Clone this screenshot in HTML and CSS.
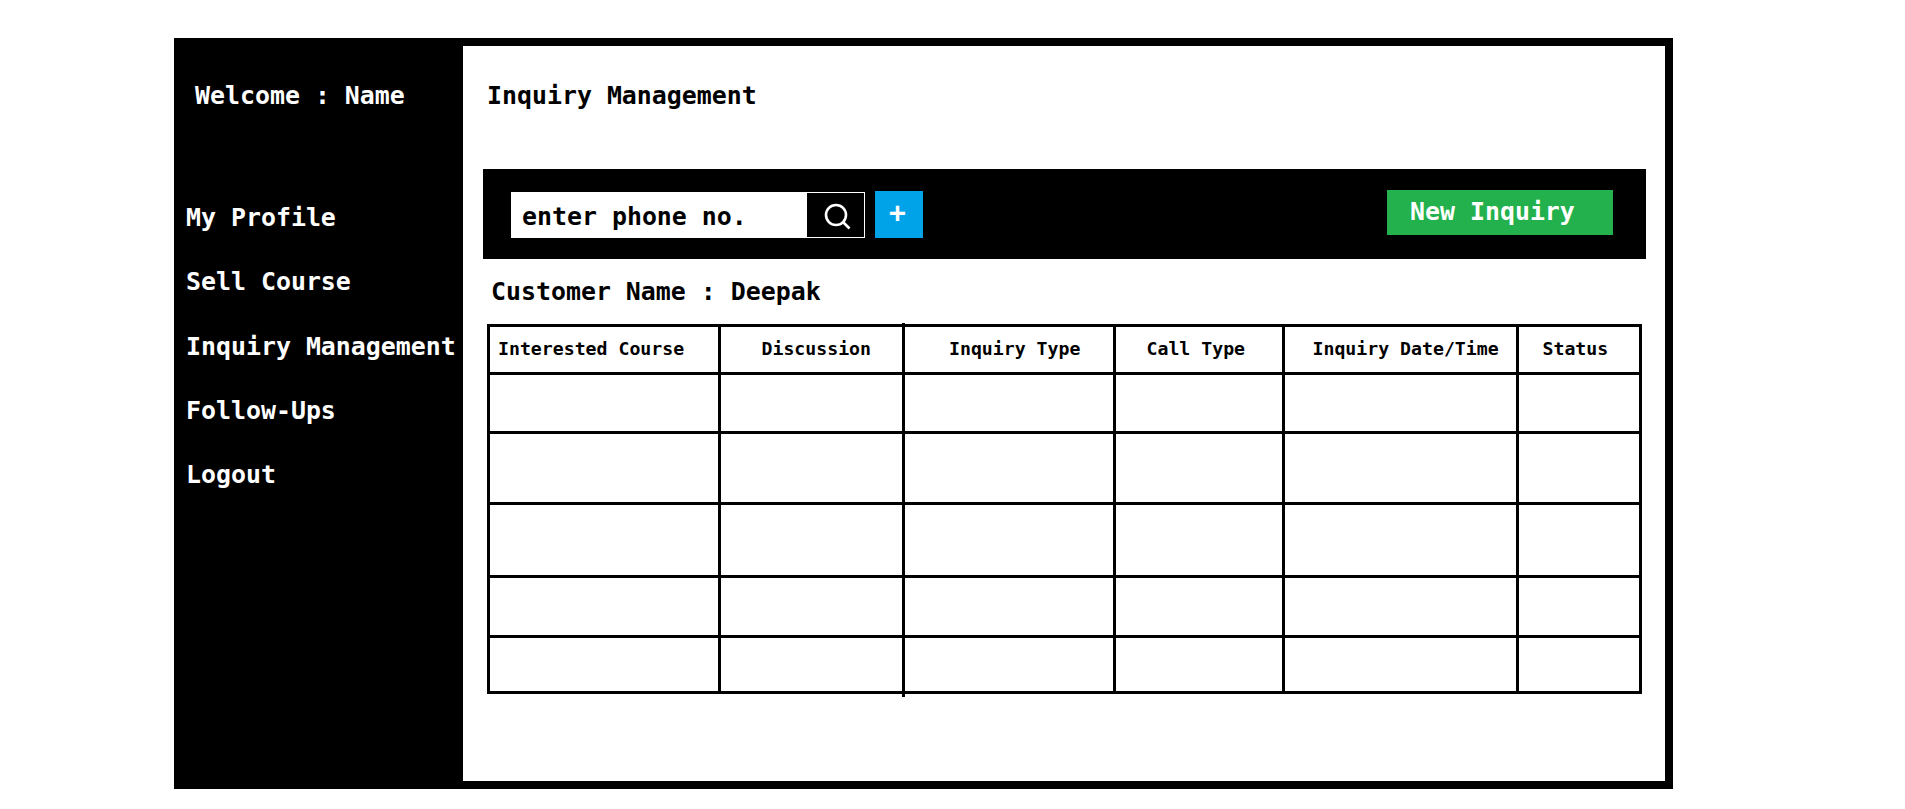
FILE: index.html
```html
<!DOCTYPE html>
<html lang="en">
<head>
    <meta charset="UTF-8">
    <meta name="viewport" content="width=device-width, initial-scale=1.0">
    <title>Inquiry Management</title>
    <link rel="stylesheet" href="styles.css">
</head>
<body>
    <div class="frame">
        <nav class="sidebar">
            <div class="welcome">Welcome : Name</div>
            <a class="nav-link" href="#">My Profile</a>
            <a class="nav-link" href="#">Sell Course</a>
            <a class="nav-link" href="#">Inquiry Management</a>
            <a class="nav-link" href="#">Follow-Ups</a>
            <a class="nav-link" href="#">Logout</a>
        </nav>

        <main class="content">
            <h1 class="page-title">Inquiry Management</h1>

            <div class="toolbar">
                <div class="search">
                    <span class="search-text">enter phone no.</span>
                    <button class="search-btn" type="button" aria-label="Search">
                        <svg width="30" height="30" viewBox="0 0 30 30" fill="none" stroke="#fff" stroke-width="2.6">
                            <circle cx="15" cy="15" r="10"/>
                            <path d="M22 22l6.5 6.5"/>
                        </svg>
                    </button>
                </div>
                <button class="add-btn" type="button">+</button>
                <button class="new-btn" type="button">New Inquiry</button>
            </div>

            <h2 class="customer">Customer Name : Deepak</h2>

            <div class="table-wrap">
                <table class="inquiries">
                    <colgroup>
                        <col class="col-course">
                        <col class="col-discussion">
                        <col class="col-type">
                        <col class="col-call">
                        <col class="col-date">
                        <col class="col-status">
                    </colgroup>
                    <thead>
                        <tr>
                            <th class="th-course">Interested Course</th>
                            <th class="th-discussion">Discussion</th>
                            <th class="th-type">Inquiry Type</th>
                            <th class="th-call">Call Type</th>
                            <th class="th-date">Inquiry Date/Time</th>
                            <th class="th-status">Status</th>
                        </tr>
                    </thead>
                    <tbody>
                        <tr class="row-a"><td></td><td></td><td></td><td></td><td></td><td></td></tr>
                        <tr class="row-b"><td></td><td></td><td></td><td></td><td></td><td></td></tr>
                        <tr class="row-c"><td></td><td></td><td></td><td></td><td></td><td></td></tr>
                        <tr class="row-d"><td></td><td></td><td></td><td></td><td></td><td></td></tr>
                        <tr class="row-e"><td></td><td></td><td></td><td></td><td></td><td></td></tr>
                    </tbody>
                </table>
            </div>
        </main>
    </div>
</body>
</html>
```

FILE: styles.css
```css
* {
    box-sizing: border-box;
}
html, body {
    height: 100%;
}
body {
    margin: 0;
    padding: 38px 0 0 174px;
    background-color: #fff;
    color: #000;
    font-family: "DejaVu Sans Mono", "Liberation Mono", monospace;
    font-weight: bold;
    overflow: hidden;
}
.frame {
    display: flex;
    width: 1499px;
    height: 751px;
    background-color: #000;
}
.sidebar {
    width: 289px;
    flex-shrink: 0;
    padding-top: 43px;
    color: #fff;
    font-size: 24.9px;
    white-space: nowrap;
}
.welcome {
    height: 122px;
    padding-left: 21px;
    line-height: 30px;
}
.nav-link {
    display: block;
    height: 64.3px;
    padding-left: 12px;
    line-height: 30px;
    color: #fff;
    text-decoration: none;
}
.content {
    flex: 1;
    margin: 8px 8px 8px 0;
    padding: 35px 19px 0 20px;
    background-color: #fff;
}
.page-title {
    margin: 0 0 0 4px;
    height: 88px;
    font-size: 24.9px;
    line-height: 30px;
}
.toolbar {
    display: flex;
    align-items: flex-start;
    height: 90px;
    padding: 0 33px 0 28px;
    background-color: #000;
}
.search {
    display: flex;
    width: 354px;
    height: 46px;
    margin-top: 23px;
    background-color: #fff;
}
.search-text {
    flex: 1;
    padding-left: 11px;
    font-size: 24.9px;
    line-height: 50px;
}
.search-btn {
    display: flex;
    align-items: center;
    justify-content: center;
    width: 59px;
    padding: 0;
    background-color: #000;
    border: 1px solid #fff;
}
.add-btn {
    width: 48px;
    height: 47px;
    margin: 22px 0 0 10px;
    padding: 0 3px 5px 0;
    background-color: #00a2e8;
    border: none;
    color: #fff;
    font: inherit;
    font-size: 28px;
}
.new-btn {
    width: 226px;
    height: 45px;
    margin: 21px 0 0 auto;
    padding: 0 0 2px 23px;
    background-color: #22b14c;
    border: none;
    color: #fff;
    font: inherit;
    font-size: 24.9px;
    text-align: left;
}
.customer {
    margin: 0 0 0 8px;
    height: 65px;
    padding-top: 18px;
    font-size: 24.9px;
    line-height: 30px;
}
.table-wrap {
    position: relative;
    width: 1152px;
    margin-left: 4px;
}
/* the line between Discussion and Inquiry Type overshoots the table a little */
.table-wrap::after {
    content: "";
    position: absolute;
    top: -1px;
    bottom: -3px;
    left: 415px;
    width: 3px;
    background-color: #000;
}
.inquiries {
    width: 100%;
    border-collapse: collapse;
    table-layout: fixed;
}
.inquiries th, .inquiries td {
    padding: 0;
    border: 3px solid #000;
}
.inquiries th {
    height: 48px;
    padding-bottom: 3px;
    font-size: 18.2px;
    text-align: left;
}
.col-course { width: 231px; }
.col-discussion { width: 184px; }
.col-type { width: 211px; }
.col-call { width: 169px; }
.col-date { width: 234px; }
.col-status { width: 123px; }
.inquiries .th-course { padding-left: 8px; }
.inquiries .th-discussion { padding-left: 40.5px; }
.inquiries .th-type { padding-left: 44px; }
.inquiries .th-call { padding-left: 30.5px; }
.inquiries .th-date { padding-left: 27.5px; }
.inquiries .th-status { padding-left: 23.5px; }
.row-a td { height: 59px; }
.row-b td { height: 71px; }
.row-c td { height: 73px; }
.row-d td { height: 60px; }
.row-e td { height: 56px; }
```
